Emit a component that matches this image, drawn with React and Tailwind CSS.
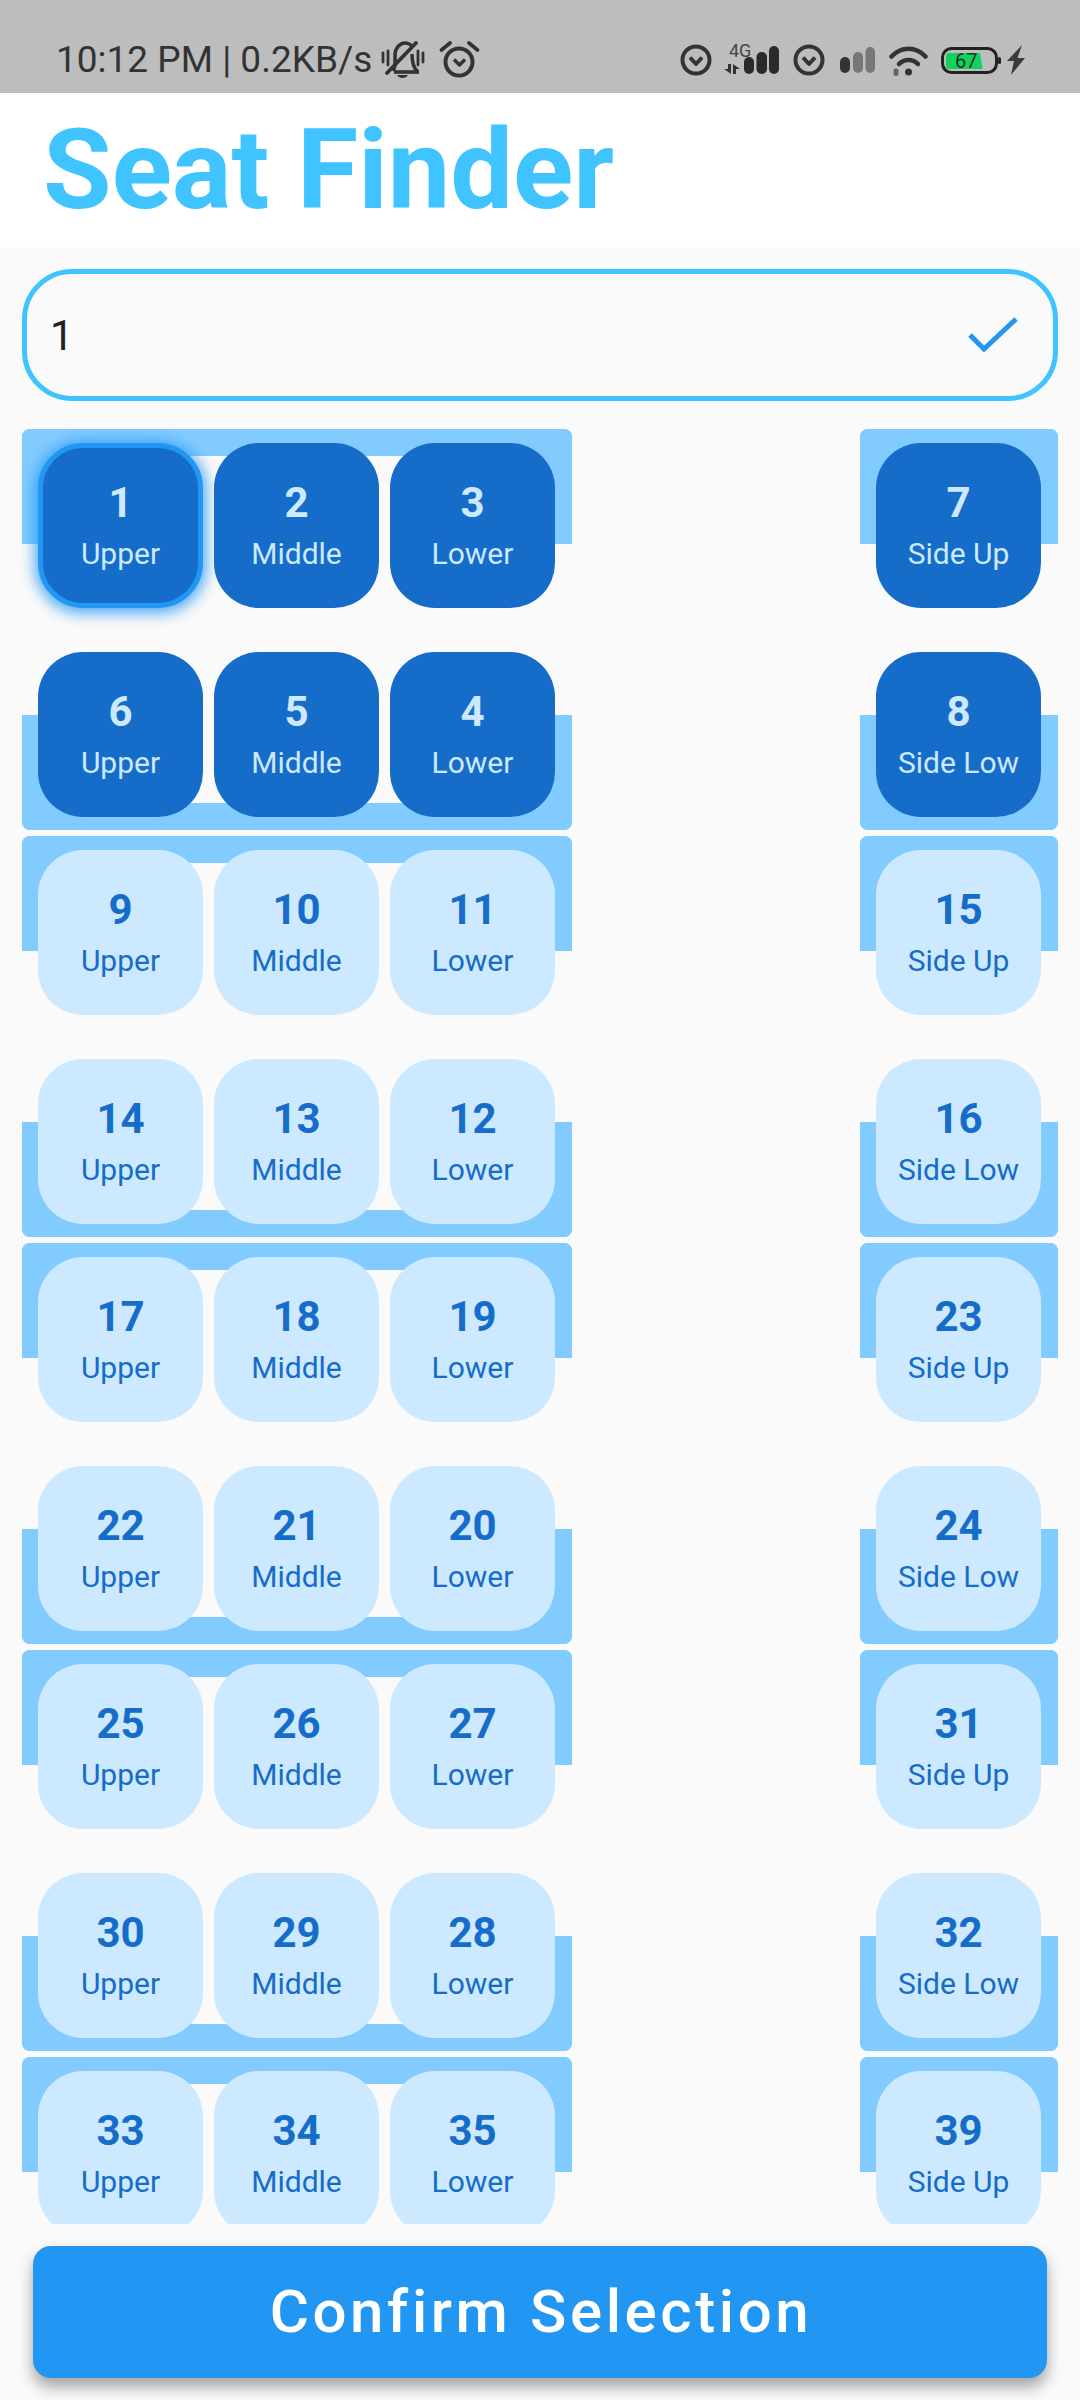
function Seat({ n, label, on, sel }) {
  return (
    <div
      className={`flex h-[165px] w-[165px] flex-col items-center justify-center rounded-[45px] pb-[3px] ${on ? 'bg-[#156cc9] text-[#cde9ff]' : 'bg-[#cde9ff] text-[#156cc9]'} ${sel ? 'border-[5px] border-[#2196f3] shadow-[0_2px_14px_4px_rgba(33,150,243,0.75)]' : ''}`}
    >
      <span className="text-[42px] leading-[49px] font-bold">{n}</span>
      <span className="mt-[9px] text-[30px] leading-[35px] font-normal">{label}</span>
    </div>
  );
}

function Walls() {
  return (
    <div className="col-start-1 row-start-1 flex h-full flex-col justify-between">
      <div className="h-[115px] rounded-t-[8px] border-x-[33px] border-t-[27px] border-[#82cbff]" />
      <div className="h-[115px] rounded-b-[8px] border-x-[33px] border-b-[27px] border-[#82cbff]" />
    </div>
  );
}

function Bay({ top, bottom, side1, side2, on, sel }) {
  const labels = ['Upper', 'Middle', 'Lower'];
  const seats = (nums) => (
    <div className="flex justify-between">
      {nums.map((n, i) => (
        <Seat key={n} n={n} label={labels[i]} on={on} sel={sel === n} />
      ))}
    </div>
  );
  return (
    <div className="flex h-[401px] justify-between">
      <div className="grid w-[550px]">
        <Walls />
        <div className="z-10 col-start-1 row-start-1 flex flex-col justify-between pt-[14px] pr-[17px] pb-[13px] pl-[16px]">
          {seats(top)}
          {bottom && seats(bottom)}
        </div>
      </div>
      <div className="grid w-[198px]">
        <Walls />
        <div className="z-10 col-start-1 row-start-1 flex flex-col items-start justify-between pt-[14px] pb-[13px] pl-[16px]">
          <Seat n={side1} label="Side Up" on={on} />
          {side2 && <Seat n={side2} label="Side Low" on={on} />}
        </div>
      </div>
    </div>
  );
}

function CircleV({ className }) {
  return (
    <svg width="32" height="32" viewBox="0 0 32 32" fill="none" stroke="#333" className={className}>
      <circle cx="16" cy="16" r="13.5" strokeWidth="4" />
      <path d="M10 13.5l6 6.5 6-6.5" strokeWidth="4" strokeLinejoin="round" />
    </svg>
  );
}

function StatusBar() {
  return (
    <div className="flex h-[93px] items-center justify-between bg-[#bdbdbd] pt-[27px] pr-[55px] pl-[56px] text-[#333333]">
      <div className="flex items-center">
        <span className="text-[37px] leading-[44px]">10:12 PM | 0.2KB/s</span>
        <svg width="44" height="40" viewBox="0 0 44 40" className="ml-[9px]" fill="none" stroke="#333" strokeWidth="3.6">
          <path d="M12 31C15 27 14 22 14 15C14 8 19 3 24 3C27 3 29 4 31 6" />
          <path d="M31 14C31 22 32 28 37 32" />
          <path d="M13 32H38" />
          <path d="M16 35h11c-1 2-3 3-5.5 3s-4.500-1-5.500-3z" fill="#333" stroke="none" />
          <path d="M6 33 35 3" strokeWidth="3.8" strokeLinecap="round" />
          <path d="M2 13v9M7 11v14M37 11v14M42 13v9" strokeWidth="2.8" strokeLinecap="round" />
        </svg>
        <svg width="41" height="40" viewBox="0 0 41 40" className="ml-[14px]" fill="none" stroke="#333">
          <circle cx="20" cy="22" r="13.5" strokeWidth="4" />
          <path d="M15 19.500l5.500 5.500 5.500-5.500" strokeWidth="3.4" strokeLinejoin="round" />
          <path d="M2.500 10l8.500-7M30 3l8.500 7" strokeWidth="3.6" strokeLinecap="round" />
        </svg>
      </div>
      <div className="flex items-center">
        <CircleV />
        <svg width="55" height="32" viewBox="0 0 55 32" fill="#333" className="ml-[12px] overflow-visible">
          <rect x="20" y="13" width="10" height="17" rx="5" fill="#2a2a2a" />
          <rect x="32.500" y="8" width="10.500" height="22" rx="5" fill="#2a2a2a" />
          <rect x="45" y="2" width="10" height="28" rx="5" fill="#2a2a2a" />
          <path d="M0 25h4v-5h3v10zM9 20v10h3v-5h4z" />
          <text x="5" y="12.500" fontSize="18" fontFamily="Roboto" fill="#444444">4G</text>
        </svg>
        <CircleV className="ml-[14px]" />
        <svg width="35" height="26" viewBox="0 0 35 26" className="ml-[15px]">
          <rect x="0" y="10" width="10" height="16" rx="5" fill="#333" />
          <rect x="13" y="5" width="10" height="21" rx="5" fill="#777" />
          <rect x="25.500" y="0" width="9.500" height="26" rx="4.700" fill="#777" />
        </svg>
        <svg width="39" height="31" viewBox="0 0 39 31" fill="none" stroke="#333" className="ml-[14px]" strokeLinecap="round">
          <path d="M2.500 11.500C12 1 27 1 36.500 11.500" strokeWidth="4.500" />
          <path d="M10 19C15 13.500 24 13.500 29 19" strokeWidth="4.500" />
          <circle cx="19.500" cy="27" r="3.500" fill="#333" stroke="none" />
          <rect x="4.500" y="23.500" width="5" height="7.500" rx="2" fill="#666" stroke="none" />
        </svg>
        <svg width="60" height="27" viewBox="0 0 60 27" className="ml-[13px]" fill="none">
          <rect x="1.500" y="1.500" width="54" height="24" rx="9" stroke="#222" strokeWidth="3" />
          <path d="M5 9q0-3 3-3h31l2.500 16H8q-3 0-3-3z" fill="#12d25e" />
          <text x="14" y="21" fontSize="20" fontFamily="Roboto" fill="#123a26">67</text>
          <rect x="57" y="10" width="3" height="7" rx="1.500" fill="#222" />
        </svg>
        <svg width="18" height="31" viewBox="0 0 18 31" className="ml-[6px]" fill="#3a3a3a">
          <path d="M15 0 0 16h7L4 30 18 13h-7.500z" />
        </svg>
      </div>
    </div>
  );
}

export default function App() {
  const bays = [
    { top: [1, 2, 3], bottom: [6, 5, 4], s1: 7, s2: 8, on: true, sel: 1 },
    { top: [9, 10, 11], bottom: [14, 13, 12], s1: 15, s2: 16 },
    { top: [17, 18, 19], bottom: [22, 21, 20], s1: 23, s2: 24 },
    { top: [25, 26, 27], bottom: [30, 29, 28], s1: 31, s2: 32 },
    { top: [33, 34, 35], s1: 39 },
  ];
  return (
    <div className="flex h-[2400px] w-[1080px] flex-col overflow-hidden bg-[#fafafa] font-['Roboto',sans-serif]">
      <StatusBar />
      <div className="flex h-[154px] items-center bg-white pl-[43px]">
        <h1 className="text-[111.5px] leading-[130px] font-bold text-[#40c4ff]">Seat Finder</h1>
      </div>
      <div className="h-[1977px] shrink-0 overflow-hidden px-[22px] pt-[22px]">
        <div className="flex h-[132px] items-center justify-between rounded-[50px] border-[5px] border-[#40c4ff] pr-[35px] pl-[23px]">
          <span className="text-[42px] text-[#212121]">1</span>
          <svg width="50" height="38" viewBox="0 0 50 38" fill="none" stroke="#2196f3" strokeWidth="5">
            <path d="M2 19 16 33 48 3" />
          </svg>
        </div>
        <div className="mt-[28px] flex flex-col gap-[6px]">
          {bays.map((b) => (
            <Bay key={b.s1} top={b.top} bottom={b.bottom} side1={b.s1} side2={b.s2} on={b.on} sel={b.sel} />
          ))}
        </div>
      </div>
      <div className="flex flex-1 justify-center pt-[22px]">
        <div className="flex h-[132px] w-[1014px] items-center justify-center rounded-[18px] bg-[#2196f3] pl-[2px] text-[60px] font-medium tracking-[3.6px] text-white shadow-[0_9px_15px_rgba(0,0,0,0.35)]">
          Confirm Selection
        </div>
      </div>
    </div>
  );
}
